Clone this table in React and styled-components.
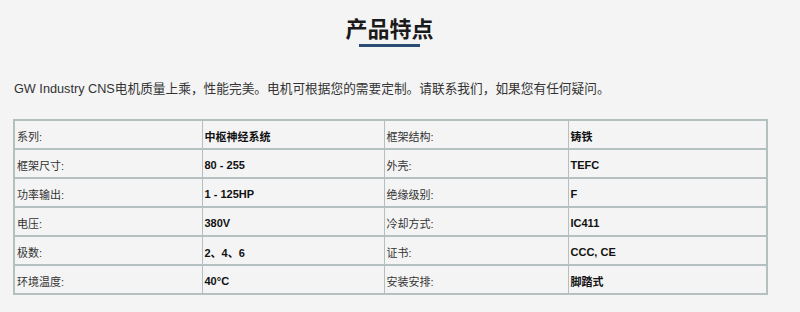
import React from "react";
import styled, { createGlobalStyle } from "styled-components";

const Global = createGlobalStyle`
  html, body { margin: 0; padding: 0; background: #f4f4f4; }
  body { font-family: "Liberation Sans", Arial, "Noto Sans CJK SC", sans-serif; color: #333; }
`;

const Page = styled.div`
  width: 800px;
  height: 312px;
  background: #f4f4f4;
  padding: 0 0 0 13px;
  box-sizing: border-box;
  overflow: hidden;
`;

const TitleBlock = styled.div`
  display: flex;
  flex-direction: column;
  align-items: center;
  width: 753px;
  padding-top: 14px;
`;

const Title = styled.h2`
  margin: 0;
  font-family: "Noto Sans CJK SC", sans-serif;
  font-size: 22px;
  font-weight: 700;
  line-height: 26px;
  color: #1a1a1a;
`;

const Underline = styled.div`
  width: 61px;
  height: 3px;
  margin-top: 4px;
  background: #2b4d74;
`;

const Intro = styled.p`
  margin: 33px 0 0 1px;
  font-size: 12.7px;
  line-height: 18px;
  color: #333;
  font-family: "Liberation Sans", Arial, "Noto Sans CJK SC", sans-serif;
`;

const Table = styled.table`
  margin-top: 21px;
  width: 753px;
  border-collapse: collapse;
  table-layout: fixed;
  border: 2px solid #b4c0c0;
`;

const Cell = styled.td`
  height: 29px;
  padding: 2px 0 0 2px;
  border: 1px solid #b4c0c0;
  border-width: 2px 1px;
  font-size: 11px;
  font-weight: ${(p) => (p.$bold ? 700 : 400)};
  color: ${(p) => (p.$bold ? "#111" : "#333")};
  font-family: "Liberation Sans", Arial, "Noto Sans CJK SC", sans-serif;
  vertical-align: middle;
  box-sizing: border-box;
`;

const rows = [
  ["系列:", "中枢神经系统", "框架结构:", "铸铁"],
  ["框架尺寸:", "80 - 255", "外壳:", "TEFC"],
  ["功率输出:", "1 - 125HP", "绝缘级别:", "F"],
  ["电压:", "380V", "冷却方式:", "IC411"],
  ["极数:", "2、4、6", "证书:", "CCC, CE"],
  ["环境温度:", "40°C", "安装安排:", "脚踏式"],
];

export default function App() {
  return (
    <Page>
      <Global />
      <TitleBlock>
        <Title>产品特点</Title>
        <Underline />
      </TitleBlock>
      <Intro>
        GW Industry CNS电机质量上乘，性能完美。电机可根据您的需要定制。请联系我们，如果您有任何疑问。
      </Intro>
      <Table>
        <colgroup>
          <col style={{ width: 188 }} />
          <col style={{ width: 182 }} />
          <col style={{ width: 184 }} />
          <col style={{ width: 199 }} />
        </colgroup>
        <tbody>
          {rows.map((r, i) => (
            <tr key={i}>
              <Cell>{r[0]}</Cell>
              <Cell $bold>{r[1]}</Cell>
              <Cell>{r[2]}</Cell>
              <Cell $bold>{r[3]}</Cell>
            </tr>
          ))}
        </tbody>
      </Table>
    </Page>
  );
}
